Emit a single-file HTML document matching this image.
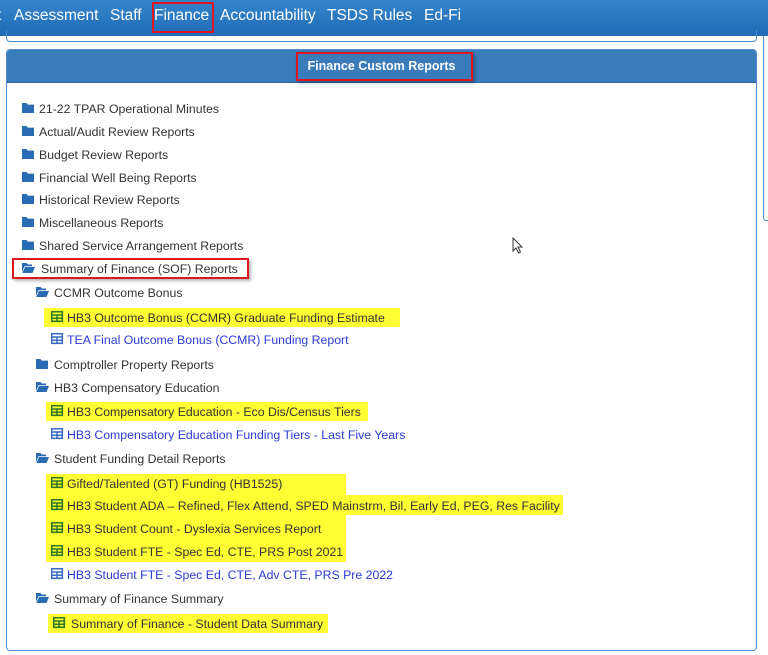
<!DOCTYPE html>
<html><head><meta charset="utf-8"><style>
*{margin:0;padding:0;box-sizing:border-box}
body{width:768px;height:655px;overflow:hidden;background:#fff;font-family:"Liberation Sans",Arial,sans-serif;position:relative}
.nav{position:absolute;left:0;top:0;width:768px;height:36px;background:linear-gradient(#3585cb,#1f6cb7)}
.nav span{position:absolute;top:7px;color:#fff;font-size:15.5px}
.r{position:absolute;border:2px solid #e0161e}
.prev{position:absolute;left:6px;top:30px;width:751px;height:12px;border:1px solid #4f8fcf;border-top:none;border-radius:0 0 4px 4px}
.side{position:absolute;left:763px;top:36px;width:10px;height:185px;border-left:1px solid #4f8fcf;border-bottom:1px solid #4f8fcf;border-radius:0 0 0 3px}
.panel{position:absolute;left:6px;top:49px;width:751px;height:602px;border:1px solid #4f8fcf;border-radius:4px;overflow:hidden}
.hdr{height:33px;background:#3a7bb9;border-bottom:1px solid #2c68a3;color:#fff;font-weight:bold;font-size:12.5px;text-align:center;line-height:33px}
.it{position:absolute;font-size:12.3px;color:#333;white-space:nowrap;line-height:18px;height:18px}
.hl{position:absolute;background:#ffff33;height:19px}
.lk{color:#2b3bd6}
svg{position:absolute}
</style></head><body>
<div class="nav">
<span style="left:-3px">t</span>
<span style="left:14px">Assessment</span>
<span style="left:110px">Staff</span>
<span style="left:154px">Finance</span>
<span style="left:220px">Accountability</span>
<span style="left:327px">TSDS Rules</span>
<span style="left:424px">Ed-Fi</span>
</div>
<div class="r" style="left:152px;top:2px;width:62px;height:31px"></div>
<div class="prev"></div>
<div class="side"></div>
<div class="panel"><div class="hdr">Finance Custom Reports</div></div>
<div class="r" style="left:296px;top:52px;width:177px;height:29px;box-shadow:2px 2px 3px rgba(0,0,0,.3)"></div>

<div class="hl" style="left:44px;top:308px;width:356px"></div>
<div class="hl" style="left:46px;top:402px;width:322px"></div>
<div class="hl" style="left:46px;top:474px;width:300px;height:22px"></div>
<div class="hl" style="left:46px;top:495px;width:517px;height:20px"></div>
<div class="hl" style="left:46px;top:514px;width:300px;height:48px"></div>
<div class="hl" style="left:48px;top:614px;width:280px"></div>

<div id="items"></div>
<script>
var F='<path d="M0 1h4.5l1.3 1.6H12V11H0z" fill="#2a6cb4"/>';
var O='<path d="M0 1h4.5l1.3 1.5H10V4.2H2.5L0 10z M3 5H13L10.5 11H0.3z" fill="#2a6cb4"/>';
function T(c){return '<rect x="0.7" y="0.7" width="10.6" height="9.6" fill="none" stroke="'+c+'" stroke-width="1.6"/><path d="M0.7 4h10.6M0.7 7.2h10.6M6 4v6.3" stroke="'+c+'" stroke-width="1.5"/>';}
var d=[
[108,1,'f','21-22 TPAR Operational Minutes'],
[131,1,'f','Actual/Audit Review Reports'],
[154,1,'f','Budget Review Reports'],
[177,1,'f','Financial Well Being Reports'],
[199,1,'f','Historical Review Reports'],
[222,1,'f','Miscellaneous Reports'],
[245,1,'f','Shared Service Arrangement Reports'],
[268,1,'o','Summary of Finance (SOF) Reports'],
[292,2,'o','CCMR Outcome Bonus'],
[317,3,'g','HB3 Outcome Bonus (CCMR) Graduate Funding Estimate'],
[339,3,'b','TEA Final Outcome Bonus (CCMR) Funding Report'],
[364,2,'f','Comptroller Property Reports'],
[387,2,'o','HB3 Compensatory Education'],
[411,3,'g','HB3 Compensatory Education - Eco Dis/Census Tiers'],
[434,3,'b','HB3 Compensatory Education Funding Tiers - Last Five Years'],
[458,2,'o','Student Funding Detail Reports'],
[483,3,'g','Gifted/Talented (GT) Funding (HB1525)'],
[505,3,'g','HB3 Student ADA \u2013 Refined, Flex Attend, SPED Mainstrm, Bil, Early Ed, PEG, Res Facility'],
[528,3,'g','HB3 Student Count - Dyslexia Services Report'],
[551,3,'g','HB3 Student FTE - Spec Ed, CTE, PRS Post 2021'],
[574,3,'b','HB3 Student FTE - Spec Ed, CTE, Adv CTE, PRS Pre 2022'],
[598,2,'o','Summary of Finance Summary'],
[623,3,'g','Summary of Finance - Student Data Summary',1]];
var h='';
d.forEach(function(e){
 var ix=[0,22,36,51][e[1]], tx=[0,39,54,67][e[1]];
 if(e[4]){ix+=2;tx+=4;}
 if(e[1]==1&&e[2]=='o'){ix=22;tx=41;}
 var ic=e[2]=='f'?F:e[2]=='o'?O:T(e[2]=='g'?'#2f7a22':'#3a6cc4');
 h+='<svg width="13" height="12" style="left:'+ix+'px;top:'+(e[0]-6)+'px" viewBox="0 0 13 12">'+ic+'</svg>';
 h+='<div class="it'+(e[2]=='b'?' lk':'')+'" style="left:'+tx+'px;top:'+(e[0]-8)+'px">'+e[3]+'</div>';
});
document.getElementById('items').innerHTML=h;
</script>
<div class="r" style="left:12px;top:258px;width:237px;height:21px;box-shadow:2px 2px 3px rgba(0,0,0,.3)"></div>
<svg width="12" height="18" style="left:512px;top:237px" viewBox="0 0 12 18"><path d="M1 1v13l3-3 2.5 5 2-1-2.5-5h4z" fill="#fff" stroke="#333" stroke-width="1"/></svg>
</body></html>
